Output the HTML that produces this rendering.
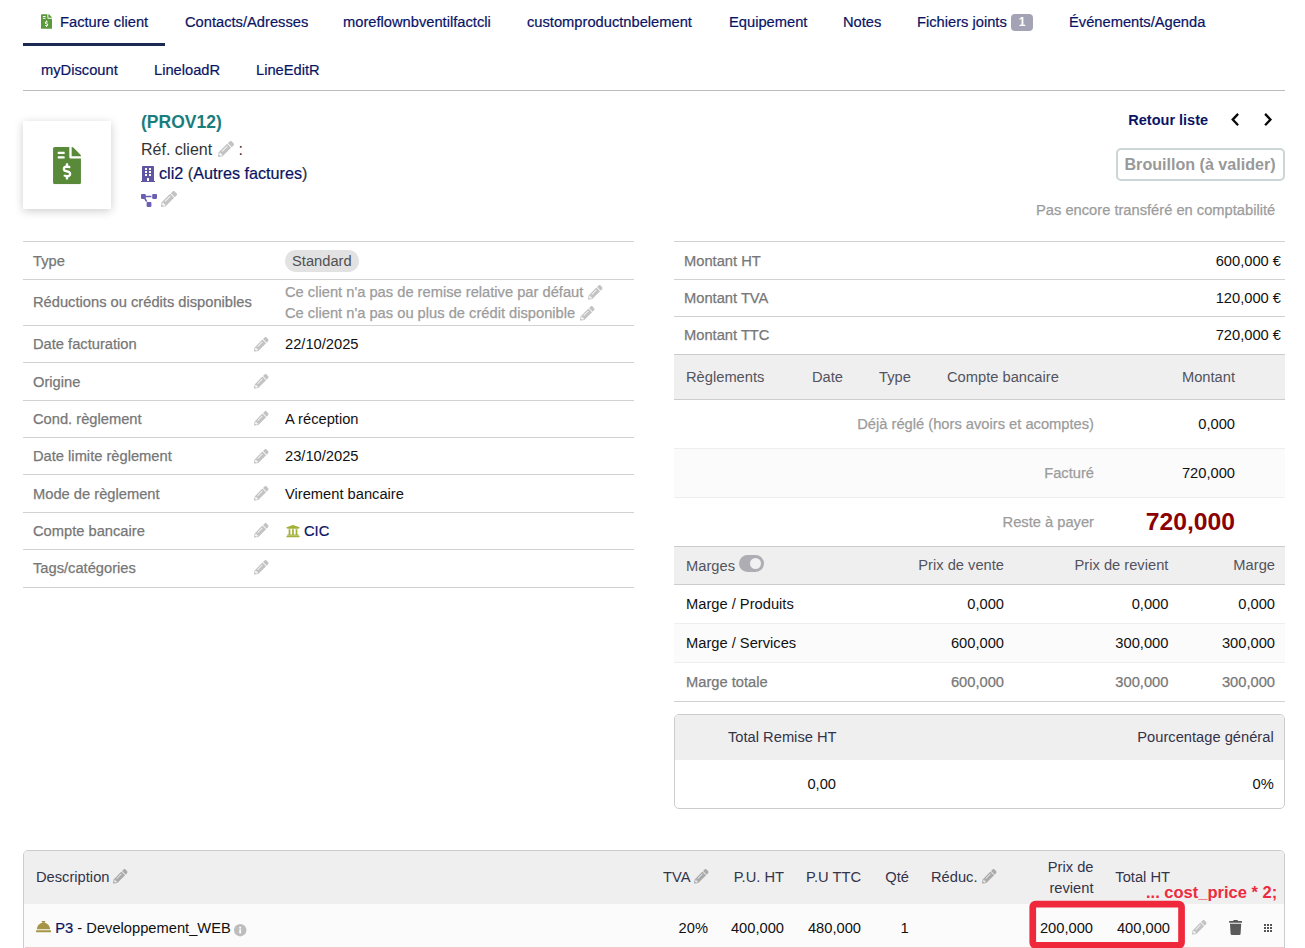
<!DOCTYPE html>
<html lang="fr"><head><meta charset="utf-8"><title>Facture client</title>
<style>
html,body{margin:0;padding:0;background:#fff;}
body{width:1305px;height:948px;position:relative;overflow:hidden;font-family:"Liberation Sans",Arial,sans-serif;font-size:14.7px;color:#111;}
.t{position:absolute;white-space:nowrap;line-height:20px;}
.r{text-align:right;}
.nav{color:#0a1464;-webkit-text-stroke:0.200px;}
.lbl{color:#777;-webkit-text-stroke:0.250px;}
.med{color:#9c9c9c;-webkit-text-stroke:0.250px;}
.hd{color:#53535e;}
.hd2{color:#33334a;}
.hl{position:absolute;height:1px;background:#d2d2d2;}
.box{position:absolute;}
svg{position:absolute;overflow:visible;}
.pen{width:14.700px;height:14.700px;fill:#c3c3c3;}
</style></head><body>
<svg width="0" height="0" style="display:none"><defs>
<symbol id="pen" viewBox="0 0 512 512"><path d="M497.9 142.1l-46.1 46.1c-4.7 4.7-12.3 4.7-17 0l-111-111c-4.7-4.7-4.7-12.3 0-17l46.1-46.1c18.7-18.7 49.1-18.7 67.9 0l60.1 60.1c18.8 18.7 18.8 49.1 0 67.9zM284.2 99.8L21.6 362.4.4 483.9c-2.900 16.400 11.400 30.600 27.800 27.800l121.500-21.300 262.600-262.600c4.700-4.700 4.700-12.300 0-17l-111-111c-4.800-4.700-12.400-4.700-17.100 0zM124.100 339.900c-5.500-5.500-5.500-14.300 0-19.800l154-154c5.500-5.500 14.300-5.500 19.800 0s5.500 14.300 0 19.800l-154 154c-5.500 5.500-14.300 5.500-19.800 0zM88 424h48v36.300l-64.500 11.300-31.100-31.100L51.700 376H88v48z"/></symbol>
<symbol id="inv" viewBox="0 0 384 512"><path d="M377 105L279.1 7c-4.500-4.500-10.600-7-17-7H256v128h128v-6.100c0-6.300-2.500-12.400-7-16.900zm-153 31V0H24C10.700 0 0 10.700 0 24v464c0 13.300 10.700 24 24 24h336c13.300 0 24-10.700 24-24V160H248c-13.200 0-24-10.800-24-24zM64 72c0-4.420 3.580-8 8-8h80c4.420 0 8 3.580 8 8v16c0 4.420-3.580 8-8 8H72c-4.420 0-8-3.580-8-8V72zm0 80v-16c0-4.420 3.580-8 8-8h80c4.420 0 8 3.580 8 8v16c0 4.420-3.580 8-8 8H72c-4.420 0-8-3.580-8-8zm144 263.880V440c0 4.420-3.580 8-8 8h-16c-4.420 0-8-3.580-8-8v-24.290c-11.290-.580-22.270-4.520-31.370-11.350-3.900-2.930-4.100-8.770-.570-12.140l11.750-11.210c2.770-2.640 6.890-2.760 10.130-.730 3.870 2.420 8.260 3.720 12.820 3.720h28.110c6.500 0 11.800-5.920 11.800-13.190 0-5.950-3.610-11.190-8.770-12.730l-45-13.500c-18.590-5.580-31.580-23.420-31.580-43.390 0-24.520 19.050-44.440 42.670-45.070V232c0-4.420 3.580-8 8-8h16c4.420 0 8 3.580 8 8v24.290c11.290.580 22.270 4.510 31.370 11.350 3.900 2.930 4.100 8.770.570 12.140l-11.750 11.210c-2.770 2.640-6.890 2.760-10.130.730-3.870-2.430-8.260-3.720-12.820-3.720h-28.110c-6.500 0-11.800 5.920-11.800 13.190 0 5.950 3.610 11.190 8.770 12.730l45 13.500c18.590 5.580 31.580 23.420 31.580 43.390 0 24.530-19.050 44.440-42.670 45.070z"/></symbol>
<symbol id="bld" viewBox="0 0 448 512"><path d="M436 480h-20V24c0-13.255-10.745-24-24-24H56C42.745 0 32 10.745 32 24v456H12c-6.627 0-12 5.373-12 12v20h448v-20c0-6.627-5.373-12-12-12zM128 76c0-6.627 5.373-12 12-12h40c6.627 0 12 5.373 12 12v40c0 6.627-5.373 12-12 12h-40c-6.627 0-12-5.373-12-12V76zm0 96c0-6.627 5.373-12 12-12h40c6.627 0 12 5.373 12 12v40c0 6.627-5.373 12-12 12h-40c-6.627 0-12-5.373-12-12v-40zm52 148h-40c-6.627 0-12-5.373-12-12v-40c0-6.627 5.373-12 12-12h40c6.627 0 12 5.373 12 12v40c0 6.627-5.373 12-12 12zm76 160h-64v-84c0-6.627 5.373-12 12-12h40c6.627 0 12 5.373 12 12v84zm64-172c0 6.627-5.373 12-12 12h-40c-6.627 0-12-5.373-12-12v-40c0-6.627 5.373-12 12-12h40c6.627 0 12 5.373 12 12v40zm0-96c0 6.627-5.373 12-12 12h-40c-6.627 0-12-5.373-12-12v-40c0-6.627 5.373-12 12-12h40c6.627 0 12 5.373 12 12v40zm0-96c0 6.627-5.373 12-12 12h-40c-6.627 0-12-5.373-12-12V76c0-6.627 5.373-12 12-12h40c6.627 0 12 5.373 12 12v40z"/></symbol>
<symbol id="prj" viewBox="0 0 640 512"><path d="M384 320H256c-17.670 0-32 14.330-32 32v128c0 17.670 14.330 32 32 32h128c17.670 0 32-14.330 32-32V352c0-17.670-14.330-32-32-32zM192 32c0-17.670-14.330-32-32-32H32C14.330 0 0 14.330 0 32v128c0 17.670 14.330 32 32 32h95.720l73.160 128.040C211.980 300.980 232.400 288 256 288h.280L192 175.510V128h224V64H192V32zM608 0H480c-17.670 0-32 14.330-32 32v128c0 17.670 14.330 32 32 32h128c17.670 0 32-14.330 32-32V32c0-17.670-14.330-32-32-32z"/></symbol>
<symbol id="uni" viewBox="0 0 512 512"><path d="M496 128v16a8 8 0 0 1-8 8h-24v12c0 6.627-5.373 12-12 12H60c-6.627 0-12-5.373-12-12v-12H24a8 8 0 0 1-8-8v-16a8 8 0 0 1 4.941-7.392l232-88a7.996 7.996 0 0 1 6.118 0l232 88A8 8 0 0 1 496 128zm-24 304H40c-13.255 0-24 10.745-24 24v16a8 8 0 0 0 8 8h464a8 8 0 0 0 8-8v-16c0-13.255-10.745-24-24-24zM96 192v192H60c-6.627 0-12 5.373-12 12v20h416v-20c0-6.627-5.373-12-12-12h-36V192h-64v192h-64V192h-64v192h-64V192H96z"/></symbol>
<symbol id="bell" viewBox="0 0 512 512"><path d="M288 130.540V112h16c8.840 0 16-7.160 16-16V80c0-8.840-7.160-16-16-16h-96c-8.840 0-16 7.160-16 16v16c0 8.840 7.160 16 16 16h16v18.540C115.490 146.110 32 239.180 32 352h448c0-112.820-83.490-205.890-192-221.460zM496 384H16c-8.840 0-16 7.160-16 16v32c0 8.840 7.160 16 16 16h480c8.840 0 16-7.160 16-16v-32c0-8.840-7.160-16-16-16z"/></symbol>
<symbol id="trash" viewBox="0 0 448 512"><path d="M432 32H312l-9.400-18.700A24 24 0 0 0 281.100 0H166.800a23.720 23.720 0 0 0-21.400 13.300L136 32H16A16 16 0 0 0 0 48v32a16 16 0 0 0 16 16h416a16 16 0 0 0 16-16V48a16 16 0 0 0-16-16zM53.200 467a48 48 0 0 0 47.900 45h245.800a48 48 0 0 0 47.900-45L416 128H32z"/></symbol>
</defs></svg>

<!-- TABS -->
<svg style="left:41px;top:14px;width:11px;height:15px;fill:#5a9a3a"><use href="#inv"/></svg>
<span class="t nav" style="left:60px;top:12px">Facture client</span>
<span class="t nav" style="left:185px;top:12px">Contacts/Adresses</span>
<span class="t nav" style="left:343px;top:12px">moreflownbventilfactcli</span>
<span class="t nav" style="left:527px;top:12px">customproductnbelement</span>
<span class="t nav" style="left:729px;top:12px">Equipement</span>
<span class="t nav" style="left:843px;top:12px">Notes</span>
<span class="t nav" style="left:917px;top:12px">Fichiers joints</span>
<span class="t" style="left:1011px;top:13.800px;width:22px;height:17.700px;line-height:17.700px;background:#a3a3b5;border-radius:4px;color:#fff;font-size:12px;font-weight:bold;text-align:center">1</span>
<span class="t nav" style="left:1069px;top:12px">Événements/Agenda</span>
<div class="box" style="left:23px;top:43px;width:142px;height:3px;background:#1b2a52"></div>
<span class="t nav" style="left:41px;top:60px">myDiscount</span>
<span class="t nav" style="left:154px;top:60px">LineloadR</span>
<span class="t nav" style="left:256px;top:60px">LineEditR</span>
<div class="hl" style="left:23px;top:90px;width:1262px;background:#bbb"></div>

<!-- BANNER -->
<div class="box" style="left:23px;top:121px;width:88px;height:88px;background:#fff;box-shadow:0 2px 9px rgba(0,0,0,.2)"></div>
<svg style="left:53px;top:146.700px;width:28px;height:37.200px;fill:#598a3a"><use href="#inv"/></svg>
<span class="t" style="left:141px;top:112px;font-size:17.5px;font-weight:bold;color:#1a7d7d">(PROV12)</span>
<span class="t" style="left:141px;top:139.500px;font-size:16px;color:#333">Réf. client</span>
<svg class="pen" style="left:218px;top:141px;width:16px;height:16px"><use href="#pen"/></svg>
<span class="t" style="left:238.500px;top:139.500px;font-size:16px;color:#333">:</span>
<span class="t nav" style="left:159px;top:163px;font-size:16.2px">cli2 <span style="color:#333">(</span>Autres factures<span style="color:#333">)</span></span>
<svg style="left:141px;top:166px;width:14px;height:16px;fill:#5f55a3"><use href="#bld"/></svg>
<svg style="left:141px;top:193.500px;width:16px;height:13px;fill:#6a5fb0"><use href="#prj"/></svg>
<svg class="pen" style="left:161px;top:191px;width:16px;height:16px"><use href="#pen"/></svg>
<svg style="left:1231px;top:112.800px;width:8.200px;height:13.200px;fill:none;stroke:#0a0a0a;stroke-width:2.300"><polyline points="7.100,0.900 1.700,6.600 7.100,12.300"/></svg>
<svg style="left:1264.200px;top:112.800px;width:8.200px;height:13.200px;fill:none;stroke:#0a0a0a;stroke-width:2.300"><polyline points="1.100,0.900 6.500,6.600 1.100,12.300"/></svg>

<span class="t nav" style="left:1128.300px;top:110px;font-weight:bold;font-size:14.500px;-webkit-text-stroke:0">Retour liste</span>
<div class="box" style="left:1116px;top:148px;width:165px;height:29px;border:2px solid #cdd6d6;border-radius:5px"></div>
<span class="t" style="left:1124.500px;top:154px;font-size:16.100px;font-weight:bold;color:#999">Brouillon (à valider)</span>
<span class="t med" style="left:1036px;top:200px">Pas encore transféré en comptabilité</span>


<!-- LEFT TABLE -->
<div class="hl" style="left:23px;top:241px;width:611px"></div>
<div class="hl" style="left:23px;top:279px;width:611px"></div>
<div class="hl" style="left:23px;top:325px;width:611px"></div>
<div class="hl" style="left:23px;top:362px;width:611px"></div>
<div class="hl" style="left:23px;top:400px;width:611px"></div>
<div class="hl" style="left:23px;top:437px;width:611px"></div>
<div class="hl" style="left:23px;top:474px;width:611px"></div>
<div class="hl" style="left:23px;top:512px;width:611px"></div>
<div class="hl" style="left:23px;top:549px;width:611px"></div>
<div class="hl" style="left:23px;top:587px;width:611px"></div>
<span class="t lbl" style="left:33px;top:251px">Type</span>
<span class="t" style="left:285px;top:250px;height:22px;line-height:22px;padding:0 7px;background:#e2e2e2;border-radius:11px;color:#505050">Standard</span>
<span class="t lbl" style="left:33px;top:292px">Réductions ou crédits disponibles</span>
<span class="t med" style="left:285px;top:282px">Ce client n'a pas de remise relative par défaut</span>
<svg class="pen" style="left:588px;top:285px"><use href="#pen"/></svg>
<span class="t med" style="left:285px;top:303px">Ce client n'a pas ou plus de crédit disponible</span>
<svg class="pen" style="left:580px;top:306px"><use href="#pen"/></svg>
<span class="t lbl" style="left:33px;top:334px">Date facturation</span>
<svg class="pen" style="left:254px;top:337px"><use href="#pen"/></svg>
<span class="t" style="left:285px;top:334px">22/10/2025</span>
<span class="t lbl" style="left:33px;top:372px">Origine</span>
<svg class="pen" style="left:254px;top:374px"><use href="#pen"/></svg>
<span class="t lbl" style="left:33px;top:409px">Cond. règlement</span>
<svg class="pen" style="left:254px;top:411px"><use href="#pen"/></svg>
<span class="t" style="left:285px;top:409px">A réception</span>
<span class="t lbl" style="left:33px;top:446px">Date limite règlement</span>
<svg class="pen" style="left:254px;top:449px"><use href="#pen"/></svg>
<span class="t" style="left:285px;top:446px">23/10/2025</span>
<span class="t lbl" style="left:33px;top:484px">Mode de règlement</span>
<svg class="pen" style="left:254px;top:486px"><use href="#pen"/></svg>
<span class="t" style="left:285px;top:484px">Virement bancaire</span>
<span class="t lbl" style="left:33px;top:521px">Compte bancaire</span>
<svg class="pen" style="left:254px;top:523px"><use href="#pen"/></svg>
<svg style="left:285.500px;top:523.500px;width:14px;height:14px;fill:#a3b038"><use href="#uni"/></svg>
<span class="t nav" style="left:304px;top:521px">CIC</span>
<span class="t lbl" style="left:33px;top:558px">Tags/catégories</span>
<svg class="pen" style="left:254px;top:560px"><use href="#pen"/></svg>

<!-- RIGHT TABLE -->
<div class="hl" style="left:674px;top:241px;width:611px"></div>
<div class="hl" style="left:674px;top:279px;width:611px"></div>
<div class="hl" style="left:674px;top:316px;width:611px"></div>
<span class="t lbl" style="left:684px;top:251px">Montant HT</span>
<span class="t r" style="right:24px;top:251px">600,000 €</span>
<span class="t lbl" style="left:684px;top:288px">Montant TVA</span>
<span class="t r" style="right:24px;top:288px">120,000 €</span>
<span class="t lbl" style="left:684px;top:325px">Montant TTC</span>
<span class="t r" style="right:24px;top:325px">720,000 €</span>

<div class="box" style="left:674px;top:354px;width:611px;height:46px;background:#efefef;border-top:1px solid #ccc;border-bottom:1px solid #ccc;box-sizing:border-box"></div>
<span class="t hd" style="left:686px;top:367px">Règlements</span>
<span class="t hd" style="left:812px;top:367px">Date</span>
<span class="t hd" style="left:879px;top:367px">Type</span>
<span class="t hd" style="left:947px;top:367px">Compte bancaire</span>
<span class="t hd r" style="right:70px;top:367px">Montant</span>
<div class="box" style="left:674px;top:448px;width:611px;height:50px;background:#fbfbfb;border-top:1px solid #eee;border-bottom:1px solid #eee;box-sizing:border-box"></div>
<span class="t med r" style="right:211px;top:414px">Déjà réglé (hors avoirs et acomptes)</span>
<span class="t r" style="right:70px;top:414px">0,000</span>
<span class="t med r" style="right:211px;top:463px">Facturé</span>
<span class="t r" style="right:70px;top:463px">720,000</span>
<span class="t med r" style="right:211px;top:512px">Reste à payer</span>
<span class="t r" style="right:70px;top:508px;font-size:24.700px;font-weight:bold;color:#8b0000;line-height:28px">720,000</span>

<div class="box" style="left:674px;top:546px;width:611px;height:39px;background:#efefef;border-top:1px solid #ccc;border-bottom:1px solid #ccc;box-sizing:border-box"></div>
<span class="t hd" style="left:686px;top:556px">Marges</span>
<div class="box" style="left:739px;top:555px;width:25px;height:17px;border-radius:8.500px;background:#adadb3"></div>
<div class="box" style="left:749.900px;top:557.800px;width:11.500px;height:11.500px;border-radius:6px;background:#f1f1f1"></div>
<span class="t hd r" style="right:301px;top:555px">Prix de vente</span>
<span class="t hd r" style="right:136.600px;top:555px">Prix de revient</span>
<span class="t hd r" style="right:30px;top:555px">Marge</span>
<div class="box" style="left:674px;top:623px;width:611px;height:40px;background:#fbfbfb;border-top:1px solid #eee;border-bottom:1px solid #eee;box-sizing:border-box"></div>
<span class="t" style="left:686px;top:594px">Marge / Produits</span>
<span class="t r" style="right:301px;top:594px">0,000</span>
<span class="t r" style="right:136.600px;top:594px">0,000</span>
<span class="t r" style="right:30px;top:594px">0,000</span>
<span class="t" style="left:686px;top:633px">Marge / Services</span>
<span class="t r" style="right:301px;top:633px">600,000</span>
<span class="t r" style="right:136.600px;top:633px">300,000</span>
<span class="t r" style="right:30px;top:633px">300,000</span>
<span class="t lbl" style="left:686px;top:672px">Marge totale</span>
<span class="t lbl r" style="right:301px;top:672px">600,000</span>
<span class="t lbl r" style="right:136.600px;top:672px">300,000</span>
<span class="t lbl r" style="right:30px;top:672px">300,000</span>
<div class="hl" style="left:674px;top:701px;width:611px"></div>

<div class="box" style="left:674px;top:714px;width:611px;height:95px;border:1px solid #ccc;border-radius:5px;box-sizing:border-box;overflow:hidden"><div style="height:45px;background:#efefef"></div></div>
<span class="t hd2" style="left:728px;top:727px">Total Remise HT</span>
<span class="t hd2 r" style="right:31.300px;top:727px">Pourcentage général</span>
<span class="t r" style="right:469px;top:774px">0,00</span>
<span class="t r" style="right:31.300px;top:774px">0%</span>

<!-- LINES TABLE -->
<div class="box" style="left:23px;top:850px;width:1262px;height:110px;border:1px solid #ccc;border-radius:5px;box-sizing:border-box;overflow:hidden;background:#fbfbfb"><div style="height:53px;background:#efefef"></div></div>
<div class="hl" style="left:25px;top:947px;width:1259px;background:#f6c8ce"></div>
<span class="t hd2" style="left:36px;top:867px">Description</span>
<svg class="pen" style="left:113px;top:869px;fill:#aaa"><use href="#pen"/></svg>
<span class="t hd2" style="left:663px;top:867px">TVA</span>
<svg class="pen" style="left:694px;top:869px;fill:#aaa"><use href="#pen"/></svg>
<span class="t hd2 r" style="right:521px;top:867px">P.U. HT</span>
<span class="t hd2 r" style="right:444px;top:867px">P.U TTC</span>
<span class="t hd2 r" style="right:396px;top:867px">Qté</span>
<span class="t hd2" style="left:931px;top:867px">Réduc.</span>
<svg class="pen" style="left:982px;top:869px;fill:#aaa"><use href="#pen"/></svg>
<span class="t hd2 r" style="right:211.500px;top:857px">Prix de</span>
<span class="t hd2 r" style="right:211.500px;top:878px">revient</span>
<span class="t hd2 r" style="right:135px;top:867px">Total HT</span>
<span class="t" style="left:1146px;top:882px;font-weight:bold;font-size:16.500px;color:#ee2a3e">... cost_price * 2;</span>

<svg style="left:36px;top:919px;width:15px;height:15px;fill:#a69544"><use href="#bell"/></svg>
<svg style="left:233.800px;top:924px;width:12.400px;height:12.400px" viewBox="0 0 12.400 12.400"><circle cx="6.200" cy="6.200" r="6.200" fill="#bdbdbd"/><rect x="5.300" y="2.800" width="1.800" height="1.800" fill="#fff"/><rect x="5.300" y="5.400" width="1.800" height="4" fill="#fff"/></svg>
<svg style="left:1228.800px;top:920px;width:13.200px;height:15px;fill:#5a5a5a"><use href="#trash"/></svg>
<svg style="left:1264px;top:924px;width:8px;height:8px;fill:#555" viewBox="0 0 8 8"><rect x="0" y="0" width="2" height="2"/><rect x="3" y="0" width="2" height="2"/><rect x="6" y="0" width="2" height="2"/><rect x="0" y="3" width="2" height="2"/><rect x="3" y="3" width="2" height="2"/><rect x="6" y="3" width="2" height="2"/><rect x="0" y="6" width="2" height="2"/><rect x="3" y="6" width="2" height="2"/><rect x="6" y="6" width="2" height="2"/></svg>
<span class="t" style="left:55.300px;top:918px"><span class="nav">P3</span> - Developpement_WEB</span>
<span class="t r" style="right:597px;top:918px">20%</span>
<span class="t r" style="right:521px;top:918px">400,000</span>
<span class="t r" style="right:444px;top:918px">480,000</span>
<span class="t r" style="right:396.400px;top:918px">1</span>
<span class="t r" style="right:212px;top:918px">200,000</span>
<span class="t r" style="right:135px;top:918px">400,000</span>
<svg class="pen" style="left:1192px;top:920px"><use href="#pen"/></svg>
<svg style="left:1029px;top:900px;width:157px;height:49px" viewBox="1029 900 157 49"><rect x="1032.750" y="904.050" width="148.800" height="41.300" rx="2.800" fill="none" stroke="#f0283c" stroke-width="6.700"/></svg>

</body></html>
